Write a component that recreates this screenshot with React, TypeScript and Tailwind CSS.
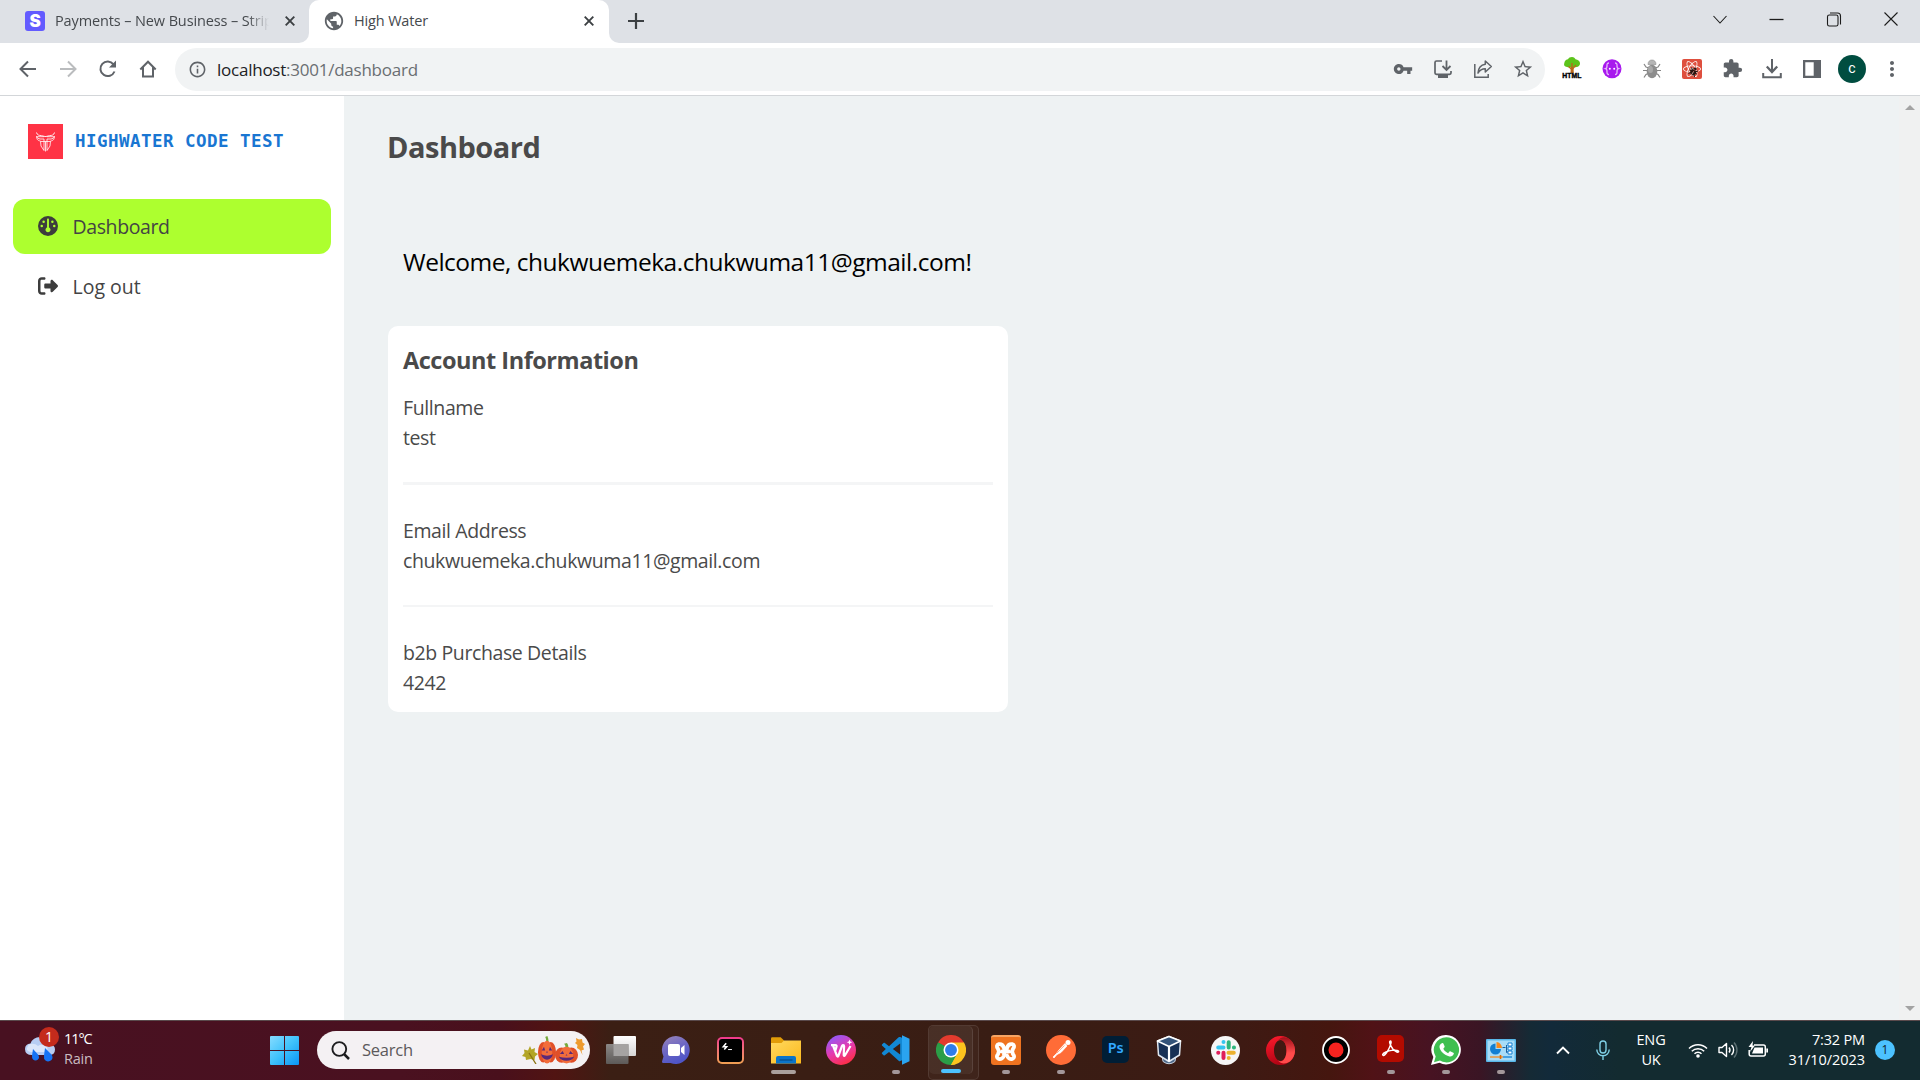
import type { ReactNode } from 'react';
import { FaGauge, FaRightFromBracket, FaReact, FaBug } from 'react-icons/fa6';
import { MdVpnKey, MdExtension, MdStarBorder, MdOutlineInfo, MdPublic, MdMoreVert } from 'react-icons/md';
import { VscVscode } from 'react-icons/vsc';

/* ---------- browser chrome ---------- */

function CloseX({ className = '' }: { className?: string }) {
  return (
    <svg viewBox="0 0 10 10" className={`size-[10px] shrink-0 ${className}`} stroke="#3c4043" strokeWidth="1.9">
      <path d="M.7.7l8.6 8.6M9.3.7L.7 9.3" />
    </svg>
  );
}

function TabStrip() {
  return (
    <div className="flex h-[43px] items-stretch bg-[#dee1e6] text-[14.5px] tracking-[-0.15px] text-[#45494d]">
      <div className="flex w-[299px] items-center pl-[25px] pb-[1px]">
        <div className="flex size-5 shrink-0 items-center justify-center rounded-[3px] bg-[#635bff] font-['Inter'] text-[17px] font-black leading-none text-white">
          S
        </div>
        <div className="ml-[10px] w-[214px] overflow-hidden whitespace-nowrap tracking-[-0.12px] [mask-image:linear-gradient(to_right,black_90%,transparent)]">
          Payments – New Business – Strip
        </div>
        <CloseX className="ml-[16px]" />
      </div>
      <div className="flex w-[10px] items-end bg-white">
        <div className="h-full w-full rounded-br-[10px] bg-[#dee1e6]" />
      </div>
      <div className="flex w-[300px] items-center rounded-t-[10px] bg-white pl-[14px] pb-[1px]">
        <MdPublic className="size-[22px] text-[#5f6368]" />
        <div className="ml-[9px] flex-1">High Water</div>
        <CloseX className="mr-[15px]" />
      </div>
      <div className="flex w-[10px] bg-white">
        <div className="h-full w-full rounded-bl-[10px] bg-[#dee1e6]" />
      </div>
      <div className="flex w-[34px] items-center justify-center pb-[1px]">
        <svg viewBox="0 0 16 16" className="size-[16px]" stroke="#3c4043" strokeWidth="2.2">
          <path d="M8 0v16M0 8h16" />
        </svg>
      </div>
      <div className="ml-auto flex items-center pb-[6px]">
        <Control>
          <path d="M1.500 5l6.500 7 6.500-7" />
        </Control>
        <Control>
          <path d="M.5 8.500h14" strokeWidth="1.300" />
        </Control>
        <Control>
          <rect x="1.500" y="4" width="10.500" height="11" rx="1.800" />
          <path d="M4 2h7.500a3 3 0 0 1 3 3v8.500" />
        </Control>
        <Control>
          <path d="M1.500 1.500l13 13M14.500 1.500l-13 13" />
        </Control>
      </div>
    </div>
  );
}

function Control({ children }: { children: ReactNode }) {
  return (
    <div className="flex w-[57.2px] justify-center">
      <svg viewBox="0 0 16 16" className="size-4" fill="none" stroke="#1c1c1c" strokeWidth="1.1">
        {children}
      </svg>
    </div>
  );
}

function ToolCell({ children }: { children: ReactNode }) {
  return <div className="flex w-10 shrink-0 items-center justify-center text-[#5f6368]">{children}</div>;
}

function Stroke({ children, color = '#5f6368' }: { children: ReactNode; color?: string }) {
  return (
    <svg viewBox="0 0 20 20" className="size-5" fill="none" stroke={color} strokeWidth="2">
      {children}
    </svg>
  );
}

function Toolbar() {
  return (
    <div className="flex h-[53px] items-stretch border-b border-[#d3d6d9] bg-white pl-[8px]">
      <div className="flex pb-[1px]">
        <ToolCell>
          <Stroke>
            <path d="M18 10H3M10 2.500L2.500 10l7.500 7.500" />
          </Stroke>
        </ToolCell>
        <ToolCell>
          <Stroke color="#babcbe">
            <path d="M2 10h15M10 2.500l7.500 7.500-7.500 7.500" />
          </Stroke>
        </ToolCell>
        <ToolCell>
          <Stroke>
            <path d="M16.500 12.500A7.300 7.300 0 1 1 15.500 5.300" />
            <path d="M18 1.500v7h-7z" fill="#5f6368" stroke="none" />
          </Stroke>
        </ToolCell>
        <ToolCell>
          <Stroke>
            <path d="M2.300 10.500L10 2.700l7.700 7.800M5 8.500V17.500h10V8.500" />
          </Stroke>
        </ToolCell>
      </div>
      <div className="ml-[7px] mt-[5px] flex h-[43px] w-[1370px] items-center rounded-full bg-[#f1f3f4] pb-[1px] pr-[2px]">
        <MdOutlineInfo className="ml-[13px] size-[19px] text-[#5f6368]" />
        <div className="ml-[10px] flex-1 pt-[2px] text-[17px] tracking-[-0.24px] text-[#6a6e72]">
          <span className="text-[#202124]">localhost</span>:3001/dashboard
        </div>
        <ToolCell>
          <MdVpnKey className="size-[20px]" />
        </ToolCell>
        <ToolCell>
          <Stroke>
            <path d="M9 2H3.500Q2 2 2 3.500v10.500Q2 15.300 3.500 15.300h13Q18 15.300 18 14v-2" strokeWidth="1.700" />
            <path d="M5 16h10v3H5z" fill="#5f6368" stroke="none" />
            <path d="M13.500 1.500v9M9.500 7l4 4 4-4" strokeWidth="1.800" />
          </Stroke>
        </ToolCell>
        <ToolCell>
          <Stroke>
            <path d="M1.800 5v13.200h13.400V15" strokeWidth="1.500" />
            <path d="M12.300 2l6 5.500-6 5.500V9.800C8.800 9.800 6.800 11 5 14c.3-5 3-8.200 7.300-8.800z" strokeWidth="1.500" strokeLinejoin="round" />
          </Stroke>
        </ToolCell>
        <ToolCell>
          <MdStarBorder className="size-[22px]" />
        </ToolCell>
      </div>
      <div className="ml-[7px] flex pb-[1px]">
        <ToolCell>
          <svg viewBox="0 0 22 22" className="-mt-[2px] size-[22px]">
            <path d="M9.800 8h2.600l.4 8H9.500z" fill="#b9691c" />
            <path d="M11 0c2 0 3 1 3.500 2.300C17 2.500 18.500 4 19 6c.3 2-1.500 4-3.500 4-1.500.5-2.500 0-4.500 0-2 .3-3.500.5-5 0C3.500 9.800 2.500 8 3.300 6 3.500 3.800 5.500 2.500 7 2.300 7.800.8 9 0 11 0z" fill="#5cc41b" />
            <path d="M7.500 9.500l3.500 3 4-4.500M11 12V6" stroke="#b9691c" strokeWidth="1.400" fill="none" />
            <text x="1.300" y="21" fontFamily="Liberation Sans" fontWeight="700" fontSize="6.800" stroke="#000" strokeWidth=".4" fill="#000" textLength="19">
              HTML
            </text>
          </svg>
        </ToolCell>
        <ToolCell>
          <svg viewBox="0 0 20 20" className="size-[20px]">
            <circle cx="10" cy="9.700" r="9.500" fill="#a819ee" />
            <path d="M7 4Q4.800 4 5 6.500 5.200 9.200 3.500 9.700 5.200 10.200 5 13q-.2 2.500 2 2.500M13 4q2.200 0 2 2.500-.2 2.700 1.500 3.200-1.700.5-1.500 3.300.2 2.500-2 2.500" fill="none" stroke="#e6b8fc" strokeWidth="1.300" />
            <circle cx="7.800" cy="9.700" r="1" fill="#fff" />
            <circle cx="12.200" cy="9.700" r="1" fill="#fff" />
          </svg>
        </ToolCell>
        <ToolCell>
          <svg viewBox="0 0 20 20" className="size-[20px]">
            <path d="M2 5l2 3 3 1M18 5l-2 3-3 1M1 11.500h18M2 18.500l2-3 3-1.500M18 18.500l-2-3-3-1.500" fill="none" stroke="#858585" strokeWidth="1.200" />
            <path d="M6 5.500C6 2.500 7.700 1 10 1s4 1.500 4 4.500z" fill="#b5b5b5" stroke="#8a8a8a" strokeWidth=".6" />
            <ellipse cx="10" cy="12.500" rx="5.300" ry="6.800" fill="#8d8d8d" />
            <ellipse cx="8.500" cy="10.500" rx="2.500" ry="3.500" fill="#a8a8a8" />
          </svg>
        </ToolCell>
        <ToolCell>
          <div className="grid size-[20px] place-items-center rounded-[2px] bg-[#de4f3e]">
            <FaReact className="col-start-1 row-start-1 size-[18px] text-white" />
            <FaBug className="col-start-1 row-start-1 ml-[3px] mt-[5px] size-[9px] rotate-[30deg] text-[#2a1512]" />
          </div>
        </ToolCell>
        <ToolCell>
          <MdExtension className="size-[21px]" />
        </ToolCell>
        <ToolCell>
          <Stroke>
            <path d="M1.200 14v4.200h17.600V14M10 0v12" />
            <path d="M4.800 7.500l5.200 5.500 5.200-5.500" strokeWidth="2.300" />
          </Stroke>
        </ToolCell>
        <ToolCell>
          <svg viewBox="0 0 18 18" className="size-[18px]">
            <path d="M0 0h18v18H0zM2.300 2.300v13.400h8.400V2.300z" fill="#5f6368" fillRule="evenodd" />
          </svg>
        </ToolCell>
        <ToolCell>
          <div className="flex size-[28px] items-center justify-center rounded-full bg-[#004d40] font-['Roboto'] text-[14px] text-white">c</div>
        </ToolCell>
        <ToolCell>
          <MdMoreVert className="size-[24px]" />
        </ToolCell>
      </div>
    </div>
  );
}

/* ---------- page ---------- */

function Sidebar() {
  return (
    <aside className="w-[344px] shrink-0 bg-white px-[13px] pt-[28px]">
      <div className="flex items-center pl-[15px]">
        <div className="flex size-[35px] items-center justify-center bg-[#ff3345]">
          <svg viewBox="0 0 19 20" className="h-[20px] w-[19px]" fill="none" stroke="#fff" strokeWidth=".9">
            <path d="M.5.5C1 3 3 3.500 5.500 3.700L9 4.500h1l3.500-.8C16 3.500 18 3 18.500.5" />
            <path d="M.5 4.500C1 7 1 8.500 4.500 9L5 14l3 4.500V7H4Q1.500 7 .5 4.500M18.500 4.500C18 7 18 8.500 14.500 9L14 14l-3 4.500V7h4q2.500 0 3.500-2.500M9.500 9.500v10M.5 4.700h7.500M11 4.700h7.500M5 9.500h9" strokeWidth=".8" />
          </svg>
        </div>
        <div className="ml-[12px] whitespace-pre font-['DejaVu_Sans_Mono'] text-[17.5px] font-bold tracking-[0.46px] text-[#1976d2]">HIGHWATER CODE TEST</div>
      </div>
      <nav className="mt-[40px] text-[19.5px] font-[370] text-[#444]">
        <a className="flex h-[55px] items-center rounded-[12px] bg-[#adff2f] pl-[25px]">
          <FaGauge className="-mt-[2px] size-5 text-[#3d3d3d]" />
          <span className="ml-[14.5px] tracking-[-0.4px]">Dashboard</span>
        </a>
        <a className="mt-[5px] flex h-[55px] items-center rounded-[12px] pl-[25px]">
          <FaRightFromBracket className="-mt-[2px] size-5 text-[#3d3d3d]" />
          <span className="ml-[14.5px] pt-px">Log out</span>
        </a>
      </nav>
    </aside>
  );
}

function Field({ label, value }: { label: string; value: string }) {
  return (
    <>
      <div>{label}</div>
      <div>{value}</div>
    </>
  );
}

function Main() {
  return (
    <main className="flex-1 bg-[#eef2f3] pl-[44px] pt-[28px]">
      <h1 className="-ml-px text-[29px] font-bold leading-[45px] tracking-[-0.5px] text-[#4a4a4a]">Dashboard</h1>
      <p className="ml-[15px] mt-[74px] text-[24.5px] font-[370] leading-[38px] tracking-[-0.49px] text-black">
        Welcome, chukwuemeka.chukwuma11@gmail.com!
      </p>
      <section className="mt-[45px] w-[620px] rounded-[10px] bg-white px-[15px] pb-[14px] pt-[16px] text-[19.5px] font-[370] leading-[30px] tracking-[-0.39px] text-[#4a4a4a]">
        <h2 className="mb-[14.5px] text-[23.5px] font-bold leading-[36px] tracking-[-0.47px]">Account Information</h2>
        <div className="border-b-[3px] border-[#f4f5f6] pb-[29.5px]">
          <Field label="Fullname" value="test" />
        </div>
        <div className="border-b-2 border-[#f4f5f6] pb-[29.5px] pt-[30.5px]">
          <Field label="Email Address" value="chukwuemeka.chukwuma11@gmail.com" />
        </div>
        <div className="pt-[30.5px]">
          <Field label="b2b Purchase Details" value="4242" />
        </div>
      </section>
    </main>
  );
}

function Scrollbar() {
  return (
    <div className="flex w-[21px] flex-col items-center justify-between bg-[#f0f1f1] py-[9px]">
      <svg viewBox="0 0 10 5" className="h-[5px] w-[10px]" fill="#a3a3a3">
        <path d="M0 5l5-5 5 5z" />
      </svg>
      <svg viewBox="0 0 10 5" className="h-[5px] w-[10px]" fill="#a3a3a3">
        <path d="M0 0l5 5 5-5z" />
      </svg>
    </div>
  );
}

/* ---------- taskbar ---------- */

type Run = 'none' | 'idle' | 'wide' | 'active';

function AppCell({ children, run = 'none' }: { children: ReactNode; run?: Run }) {
  const cell = (
    <>
      <div className="flex h-[30px] items-center justify-center">{children}</div>
      {run === 'idle' && <div className="mt-[5px] h-1 w-2 rounded-full bg-[#a3979a]" />}
      {run === 'wide' && <div className="mr-[4px] mt-[5px] h-1 w-[25px] rounded-full bg-[#aaa09d]" />}
      {run === 'active' && <div className="mt-[4px] h-1 w-5 rounded-full bg-[#4cc2ff]" />}
    </>
  );
  if (run === 'active') {
    return (
      <div className="flex w-[55px] justify-center pt-[4px]">
        <div className="-mr-[6px] flex rounded-[5px] border border-white/10 bg-white/[0.03] pr-[5px]">
          <div className="flex h-[48px] w-[44px] flex-col items-center rounded-[5px] border-r border-white/10 bg-white/5 pt-[9px]">{cell}</div>
        </div>
      </div>
    );
  }
  return <div className="flex w-[55px] flex-col items-center pt-[14px]">{cell}</div>;
}

function Apps() {
  return (
    <div className="ml-[3px] flex">
      <AppCell>
        <svg viewBox="0 0 30 28" className="h-[28px] w-[30px]">
          <defs>
            <linearGradient id="tv1" x1="0" y1="0" x2="0" y2="1"><stop stopColor="#fff" /><stop offset="1" stopColor="#d5d5d5" /></linearGradient>
            <linearGradient id="tv2" x1="0" y1="0" x2="0" y2="1"><stop stopColor="#8b8886" /><stop offset="1" stopColor="#5d5a58" /></linearGradient>
          </defs>
          <rect x="7.500" width="22.500" height="20" rx="1" fill="url(#tv1)" />
          <rect y="8" width="22.500" height="20" rx="1" fill="url(#tv2)" />
          <path d="M7.500 8h15v12h-15z" fill="#a5a3a2" />
        </svg>
      </AppCell>
      <AppCell>
        <svg viewBox="0 0 30 30" className="size-[30px]">
          <defs><linearGradient id="cam" x1="0" y1="0" x2=".4" y2="1"><stop stopColor="#9a86b8" /><stop offset=".5" stopColor="#6f68c4" /><stop offset="1" stopColor="#4f55c7" /></linearGradient></defs>
          <path d="M15 1a14 14 0 1 1-5.500 27H1.500L1 26.500l1.500-5A14 14 0 0 1 15 1z" fill="url(#cam)" />
          <rect x="7" y="9" width="12" height="12" rx="2" fill="#fff" />
          <path d="M20 13l3.500-3v10L20 17z" fill="#fff" />
        </svg>
      </AppCell>
      <AppCell>
        <div className="rounded-[5px] bg-gradient-to-b from-[#f0358c] to-[#f0a050] p-[2px]">
          <svg viewBox="0 0 24 24" className="size-[23px] rounded-[3px] bg-black" fill="none" stroke="#fff">
            <path d="M7.500 4.500L4.500 8h3.500L5.500 11" strokeWidth="1.600" />
            <path d="M9.500 11h4" strokeWidth="1" />
          </svg>
        </div>
      </AppCell>
      <AppCell run="wide">
        <svg viewBox="0 0 30 27" className="mt-[1px] h-[27px] w-[30px]">
          <defs><linearGradient id="fol" x1="0" y1="0" x2="1" y2="1"><stop stopColor="#ffd95f" /><stop offset="1" stopColor="#fcb91d" /></linearGradient></defs>
          <path d="M0 1.500Q0 .3 1.200.3h8.500L13 3.500v4H0z" fill="#e19c08" />
          <path d="M0 6h10.500L13 3.500h17V26.500H0z" fill="url(#fol)" />
          <path d="M5 26.500V21q0-2 2-2h16q2 0 2 2v5.500z" fill="#0b74c9" />
          <path d="M8.500 23h13" stroke="#04437c" strokeWidth="1" />
        </svg>
      </AppCell>
      <AppCell>
        <svg viewBox="0 0 30 30" className="size-[30px]">
          <defs><linearGradient id="wps" x1=".2" y1="0" x2=".7" y2="1"><stop stopColor="#8a5cff" /><stop offset=".5" stopColor="#e43bb0" /><stop offset="1" stopColor="#ff2d3f" /></linearGradient></defs>
          <circle cx="15" cy="15" r="15" fill="url(#wps)" />
          <path d="M5 10.200h4.500q1.500 0 1 1.500l-1.500 5M7 10.500l4 10.500q.7 1.200 1.300 0L16 11q.5-.9 1.200-.9.900 0 .9 1.200l-.4 8.700q.3 1.700 1.300.2L24.500 11" fill="none" stroke="#fff" strokeWidth="2.200" strokeLinejoin="round" />
          <path d="M23.500 4.500l.8 2 2 .8-2 .8-.8 2-.8-2-2-.8 2-.8z" fill="#fff" />
        </svg>
      </AppCell>
      <AppCell run="idle">
        <div className="-ml-px grid">
          <VscVscode className="col-start-1 row-start-1 size-[30px] text-[#1288d4]" />
          <svg viewBox="0 0 30 30" className="col-start-1 row-start-1 size-[30px]">
            <path d="M22 .3l7.500 3.500v22.400L22 29.700z" fill="#2aa4f0" />
          </svg>
        </div>
      </AppCell>
      <AppCell run="active">
        <svg viewBox="0 0 48 48" className="size-[30px]">
          <path d="M24 24L3.200 12A24 24 0 0 1 44.800 12z" fill="#e33b2e" />
          <path d="M24 24L44.800 12A24 24 0 0 1 24 48z" fill="#fcc31e" />
          <path d="M24 24L24 48A24 24 0 0 1 3.200 12z" fill="#2b9e47" />
          <path d="M24 12h20.800L34 30z" fill="#fcc31e" />
          <path d="M3.200 12L14 30l12-6z" fill="#2b9e47" />
          <path d="M34 30L24 48 13.500 29z" fill="#2b9e47" />
          <path d="M34.300 30L24 48l6-.7 8-10z" fill="#fcc31e" />
          <circle cx="24" cy="24" r="12" fill="#fff" />
          <circle cx="24" cy="24" r="9.500" fill="#2f7de9" />
        </svg>
      </AppCell>
      <AppCell run="idle">
        <div className="flex size-[30px] items-center justify-center rounded-[3px] border-t-2 border-[#f7a564] bg-[#ef7320]">
          <svg viewBox="0 0 24 22" className="h-[21px] w-[23px]" fill="none" stroke="#fff" strokeWidth="4" strokeLinejoin="round" strokeLinecap="round">
            <path d="M8.500 11c3 0 3-1 2-3.500C9.500 4 7 3 5 3.300 2.500 4 2.500 6.500 4 8c1 1.500 1 4.500 0 6-1.500 1.500-1.500 4 .8 4.800 2.500.5 5-1 5.500-3.500L11 11h4.500M15.500 11c-3 0-3-1-2-3.500C14.500 4 17 3 19 3.300 21.500 4 21.500 6.500 20 8c-1 1.500-1 4.500 0 6 1.500 1.500 1.500 4-.8 4.800-2.500.5-5-1-5.500-3.500" />
          </svg>
        </div>
      </AppCell>
      <AppCell run="idle">
        <svg viewBox="0 0 30 30" className="size-[30px]">
          <circle cx="15" cy="15" r="15" fill="#ff6c37" />
          <path d="M19 8.500l2 2.500-6 6.500-4 2-3 3.500-1-1 3.500-3.500L13 15z" fill="#fff" stroke="#fff" strokeWidth=".7" />
          <path d="M11 18l7.500-7.500" stroke="#ff9a75" strokeWidth=".8" />
          <circle cx="22" cy="7.500" r="2.500" fill="#fff" />
        </svg>
      </AppCell>
      <AppCell>
        <div className="-mt-[2px] flex h-[27px] w-[27px] items-center justify-center rounded-[5px] bg-[#001e36] font-['Noto_Sans'] text-[14.500px] font-semibold leading-none tracking-[-0.3px] text-[#31a8ff]">
          <span className="-mt-[3px]">Ps</span>
        </div>
      </AppCell>
      <AppCell>
        <svg viewBox="0 0 26 30" className="-ml-[4px] h-[30px] w-[26px]" strokeLinejoin="round">
          <path d="M6 20l1 6.500q6 4.500 12 0l1-6.500z" fill="#4d6889" stroke="#c5d0de" strokeWidth="1" />
          <path d="M13 1.500L24.500 6l-1 14L13 26.500 2.500 20l-1-14z" fill="#173055" stroke="#dfe6ef" strokeWidth="1.500" />
          <path d="M13 1.500L24.500 6 13 11.500 1.500 6z" fill="#345379" stroke="#fff" strokeWidth="1.600" />
          <path d="M13 11.500v15" stroke="#fff" strokeWidth="2.200" />
        </svg>
      </AppCell>
      <AppCell>
        <div className="flex size-[29px] items-center justify-center rounded-full bg-[#f6f6f6]">
          <svg viewBox="0 0 20 20" className="size-[20px]" strokeWidth="4" strokeLinecap="round">
            <path d="M7.500 2v.1M2.200 7.500h5.300" stroke="#36c5f0" />
            <path d="M12.700 2.200v5.300M18 7.500h-.1" stroke="#2eb67d" />
            <path d="M12.700 18v-.1M12.500 12.700h5.300" stroke="#ecb22e" />
            <path d="M7.500 12.700v5.200M2.200 12.700h.1" stroke="#e01e5a" />
          </svg>
        </div>
      </AppCell>
      <AppCell>
        <svg viewBox="0 0 29 29" className="size-[29px]">
          <defs><linearGradient id="opA" x1="0" y1="0" x2=".3" y2="1"><stop stopColor="#ff1b2d" /><stop offset="1" stopColor="#b00414" /></linearGradient><linearGradient id="opB" x1="0" y1="0" x2="0" y2="1"><stop stopColor="#a0101a" /><stop offset=".6" stopColor="#ff4b4b" /></linearGradient></defs>
          <path d="M14.500 0a14.500 14.500 0 1 0 0 29 14.500 14.500 0 1 0 0-29zM14.500 4c3.500 0 6 4.500 6 10.500s-2.500 10.500-6 10.500-6.500-4.500-6.500-10.500S11 4 14.500 4z" fill="url(#opA)" fillRule="evenodd" />
          <path d="M12 4.500C18 1.500 20.500 9 20.500 14.500S18 27.500 12 24.500c3 4 8 3.500 12 1A14.500 14.500 0 0 0 24 3.500C20 .5 15 .5 12 4.500z" fill="url(#opB)" />
        </svg>
      </AppCell>
      <AppCell>
        <svg viewBox="0 0 28 28" className="size-[28px]">
          <circle cx="14" cy="14" r="13" fill="#000" stroke="#fff" strokeWidth="1.800" />
          <circle cx="14" cy="14" r="7.500" fill="#f6231f" />
        </svg>
      </AppCell>
      <AppCell run="idle">
        <div className="-mt-[3px] flex size-[27px] items-center justify-center rounded-[5px] bg-[#b30b00]">
          <svg viewBox="0 0 20 20" className="size-[19px]" fill="none" stroke="#fff" strokeWidth="1.500">
            <path d="M10 2c-2.500 0 .5 6 2.500 8.500 2 2 5 4 6 3 .8-1.500-3-2-7-1.500s-9.500 2.500-9.800 4.500c.5 2.500 4-1 6-5S11.700 2.500 10 2z" />
          </svg>
        </div>
      </AppCell>
      <AppCell run="idle">
        <svg viewBox="0 0 30 30" className="size-[30px]">
          <path d="M15.300 0a14.700 14.700 0 1 1-6.800 27.800L0 30l2.300-8A14.700 14.700 0 0 1 15.300 0z" fill="#fff" />
          <path d="M15.300 2.200A12.600 12.600 0 1 1 9 25.600l-6 1.600 1.700-5.800A12.600 12.600 0 0 1 15.300 2.200z" fill="#3fbf50" />
          <path d="M11 8.200c.8-.3 1.300-.1 1.600.7l1 2.300c.2.500 0 1-.3 1.400l-1 1.200c1 2 2.600 3.400 4.800 4.400l1.400-1.600c.3-.4.8-.4 1.200-.2l2.600 1.300c.6.300.6.700.4 1.400-.6 2-2.500 2.700-4.300 2.300-5-1-9.500-5.400-9.900-9.300-.1-1.800.9-3.400 2.500-3.900z" fill="#fff" />
        </svg>
      </AppCell>
      <AppCell run="idle">
        <svg viewBox="0 0 30 23" className="h-[23px] w-[30px]">
          <rect width="30" height="23" rx="1" fill="#58b7e8" />
          <rect x="1.500" y="1.500" width="27" height="20" fill="#a8dcf7" />
          <path d="M9.500 4.500A5.500 5.500 0 1 0 15 10H9.500z" fill="#137fd2" />
          <path d="M10.500 3v6h5.500a6 6 0 0 0-5.500-6z" fill="#f58a1f" />
          <path d="M16.500 8.500h3M20.500 6v7.500M20 13h3" stroke="#1d5f9c" strokeWidth="1" />
          <path d="M22 4h4v3h-4zM22 8h4v3h-4zM22 12h4v3h-4z" fill="#fff" stroke="#137fd2" />
          <path d="M4 18h13" stroke="#f58a1f" strokeWidth="1.300" />
          <path d="M17 18h9" stroke="#137fd2" strokeWidth="1.300" />
          <path d="M14.500 16v4" stroke="#e06c00" strokeWidth="1.600" />
        </svg>
      </AppCell>
    </div>
  );
}

function Pumpkin({ className }: { className: string }) {
  return (
    <svg viewBox="0 0 24 26" className={className} preserveAspectRatio="none">
      <path d="M11 6Q11 2 9.500 1L12.500 0Q14 2 14 6z" fill="#76a83a" />
      <ellipse cx="7" cy="15" rx="7" ry="9.500" fill="#e04f28" />
      <ellipse cx="17" cy="15" rx="7" ry="9.500" fill="#e04f28" />
      <ellipse cx="12" cy="15" rx="7" ry="10.500" fill="#f26d3b" />
      <path d="M5 13.500l3-3.500 1.500 3.500zM14.500 13.500L16 10l3 3.500zM11 15.500l1-1.700 1 1.700zM4 17q8 2.500 16 0-2 5-8 5t-8-5z" fill="#5a2878" />
    </svg>
  );
}

function SearchPill() {
  return (
    <div className="mt-[10px] flex h-[38px] w-[273px] items-center rounded-full bg-[#f4f1f3] pl-[14px]">
      <svg viewBox="0 0 19 19" className="size-[19px]" fill="none" stroke="#1d1d1f">
        <circle cx="8.300" cy="8" r="6.900" strokeWidth="1.900" />
        <path d="M13 13l5 5" strokeWidth="2.500" />
      </svg>
      <div className="ml-[12px] flex-1 pt-px text-[16.5px] tracking-[-0.25px] text-[#5c595b]">Search</div>
      <div className="mr-[5px] flex items-end">
        <svg viewBox="0 0 16 18" className="h-[18px] w-[16px]">
          <path d="M8 0l1.500 3.500L13 2l-.5 4L16 8l-3 2.500-.5 3.500-4-1L4 14l-.5-3L0 10l2.500-3L2 3.500l4 1z" fill="#b3a526" />
          <path d="M7 7l7 11" stroke="#8a7412" strokeWidth="1.300" />
        </svg>
        <Pumpkin className="h-[28px] w-[18px]" />
        <Pumpkin className="-ml-[1px] h-[21px] w-[23px]" />
        <svg viewBox="0 0 10 17" className="-ml-[3px] mb-[9px] h-[17px] w-[10px]">
          <path d="M1 0l3 1.500L7 1l.500 3.500L10 6 8 8.500l1 3-2.500 1L7.500 17 5 12 2 10l.5-3L0 5l1.500-1.500z" fill="#ee9a2e" />
        </svg>
      </div>
    </div>
  );
}

function Tray() {
  return (
    <div className="ml-auto flex items-center pb-px pr-[25px] text-[14.5px] leading-[20px] text-white">
      <svg viewBox="0 0 14 9" className="h-[9px] w-[14px]" fill="none" stroke="#fff" strokeWidth="1.900">
        <path d="M1 7.500l6-6 6 6" />
      </svg>
      <svg viewBox="0 0 14 20" className="ml-[26px] h-[20px] w-[14px]" fill="none" stroke="#7fd0e6" strokeWidth="1.400">
        <rect x="4" y="1" width="6" height="12" rx="3" />
        <path d="M.8 9.500a6.200 6.200 0 0 0 12.400 0M7 15.700V20" />
      </svg>
      <div className="ml-[22px] w-[38px] text-center">
        <div className="tracking-[-0.1px]">ENG</div>
        <div className="tracking-[-0.3px]">UK</div>
      </div>
      <svg viewBox="0 0 20 16" className="ml-[18px] h-[16px] w-[20px]" fill="none" stroke="#fff" strokeWidth="1.500">
        <path d="M1 6.500a12.700 12.700 0 0 1 18 0M3.800 9.300a8.700 8.700 0 0 1 12.400 0M6.500 11.800a5 5 0 0 1 7 0" />
        <circle cx="10" cy="14" r="1.800" fill="#fff" stroke="none" />
      </svg>
      <svg viewBox="0 0 20 18" className="ml-[10px] h-[18px] w-[20px]" fill="none" stroke="#fff" strokeWidth="1.400">
        <path d="M1 6.500h3l4.500-4v13l-4.500-4H1z" strokeLinejoin="round" />
        <path d="M11 6.500a4 4 0 0 1 0 5M13.500 4a7 7 0 0 1 0 10" />
        <path d="M16 1.500a11 11 0 0 1 0 15" stroke="#5d7073" />
      </svg>
      <svg viewBox="0 0 20 17" className="-mt-[2px] ml-[10px] h-[17px] w-[20px]">
        <path d="M6 4h9.500Q17.300 4 17.300 6v7q0 2-1.800 2H3q-1.800 0-1.800-2V9" fill="none" stroke="#fff" strokeWidth="1.500" />
        <path d="M6.500 6.500h8.500v6H4zM18.300 7.500H20v4h-1.700z" fill="#fff" />
        <path d="M5 0L.5 6h3L2 11l5-6.500H4.500z" fill="#fff" />
      </svg>
      <div className="ml-[20px] w-[77px] text-right">
        <div className="tracking-[-0.17px]">7:32 PM</div>
        <div className="-ml-1 whitespace-nowrap tracking-[-0.05px]">31/10/2023</div>
      </div>
      <div className="ml-[10px] flex size-5 items-center justify-center rounded-full bg-[#4cc2ff] text-[12px] text-[#10252c]">1</div>
    </div>
  );
}

function Taskbar() {
  return (
    <footer className="flex h-[60px] border-t border-[#5a4a4c] bg-[linear-gradient(90deg,#481121_0px,#4a1120_400px,#49101c_500px,#511412_555px,#3b1f14_610px,#391d14_1000px,#3c1b14_1220px,#45160f_1330px,#501216_1372px,#471322_1430px,#3a1524_1480px,#152a35_1530px,#122a3a_1550px,#132b30_1620px,#132b30_1920px)]">
      <div className="flex w-[270px] items-start pl-[25px] pt-[6px]">
        <div className="relative">
          <svg viewBox="0 0 31 30" className="mt-[7px] h-[30px] w-[31px]">
            <path d="M7 21Q0 21 0 15q0-5 5.500-5.500Q8 3 15 3q8 0 10 7 5 1 5 5.500 0 5.500-6 5.500z" fill="#b7cdf3" />
            <path d="M5 10q5-1 8 2 4-3 9 1 2 4-3 5H6q-5-1-4-4 1-3 3-4z" fill="#dbe6fa" />
            <path d="M8 15l5 5.500q2 3 0 5-2.500 2-5 0-1.200-1-1-4zM20 14l6.500 6.500q2 3 0 5.500-3 2.500-6 .5-2-1.500-1.500-5z" fill="#1573f5" />
          </svg>
          <div className="absolute left-[14px] top-0 flex size-[20px] items-center justify-center rounded-full bg-[#c42b1c] text-[14px] leading-none text-white">1</div>
        </div>
        <div className="ml-[8px] mt-[2px] text-[14.5px] leading-[20px]">
          <div className="tracking-[-1.1px] text-white">11°C</div>
          <div className="tracking-[-0.2px] text-[#c9bcc0]">Rain</div>
        </div>
      </div>
      <svg viewBox="0 0 29 29" className="mt-[15px] size-[29px]">
        <defs><linearGradient id="win" x1="0" y1="0" x2="1" y2="1"><stop stopColor="#86dcff" /><stop offset=".5" stopColor="#3fc2fb" /><stop offset="1" stopColor="#0a94f5" /></linearGradient></defs>
        <path d="M1 0h13v14H0V1q0-1 1-1zM15 0h13q1 0 1 1v13H15zM0 15h14v14H1q-1 0-1-1zM15 15h14v13q0 1-1 1H15z" fill="url(#win)" />
      </svg>
      <div className="w-[18px]" />
      <SearchPill />
      <Apps />
      <Tray />
    </footer>
  );
}

export default function App() {
  return (
    <div className="flex h-[1080px] w-[1920px] flex-col overflow-hidden font-['Open_Sans',sans-serif]">
      <TabStrip />
      <Toolbar />
      <div className="flex flex-1">
        <Sidebar />
        <Main />
        <Scrollbar />
      </div>
      <Taskbar />
    </div>
  );
}
